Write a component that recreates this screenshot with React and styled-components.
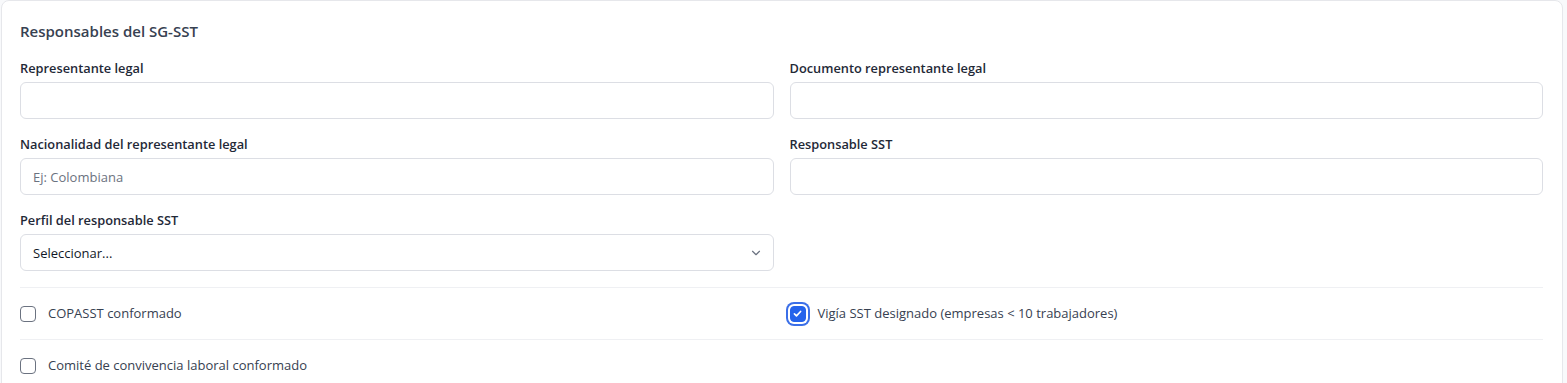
import React from "react";
import styled, { createGlobalStyle } from "styled-components";

const Global = createGlobalStyle`
  html, body { margin: 0; padding: 0; background: #f8f9fb; }
  body { font-family: "Open Sans", "Noto Sans", Arial, sans-serif; }
  * { box-sizing: border-box; }
`;

const Card = styled.section`
  margin: 0 4px 0 1px;
  background: #ffffff;
  border: 1px solid #e6e7eb;
  border-radius: 8px;
  padding: 19px 19px 20px 18px;
  min-height: 400px;
`;

const Title = styled.h2`
  margin: 0 0 17px 0;
  font-size: 15px;
  line-height: 22px;
  font-weight: 600;
  color: #374151;
`;

const Grid = styled.div`
  display: grid;
  grid-template-columns: 1fr 1fr;
  column-gap: 16px;
  row-gap: 16px;
`;

const Field = styled.div`
  display: flex;
  flex-direction: column;
  gap: 5px;
`;

const Label = styled.label`
  font-size: 12.8px;
  line-height: 18px;
  font-weight: 600;
  color: #1f2937;
`;

const Input = styled.input`
  height: 37px;
  width: 100%;
  border: 1px solid #dcdee4;
  border-radius: 6px;
  padding: 0 12px;
  font-family: inherit;
  font-size: 13px;
  color: #111827;
  background: #fff;
  outline: none;
  &::placeholder { color: #6b7280; }
`;

const SelectBox = styled.div`
  height: 37px;
  border: 1px solid #dcdee4;
  border-radius: 6px;
  padding: 0 10px 0 12px;
  display: flex;
  align-items: center;
  justify-content: space-between;
  font-size: 13px;
  color: #111827;
`;

const Checks = styled.div`
  margin-top: 16px;
  display: flex;
  flex-direction: column;
`;

const CheckRow = styled.div`
  display: grid;
  grid-template-columns: 1fr 1fr;
  column-gap: 16px;
  border-top: 1px solid #eff0f3;
  padding: 16px 0;
`;

const CheckLabel = styled.label`
  display: flex;
  align-items: center;
  gap: 12px;
  font-size: 13px;
  line-height: 19px;
  color: #374151;
`;

const Box = styled.span`
  width: 16px;
  height: 16px;
  flex: none;
  border-radius: 4px;
  display: flex;
  align-items: center;
  justify-content: center;
  border: 1.5px solid ${(p) => (p.$checked ? "#2563eb" : "#6b7280")};
  background: ${(p) => (p.$checked ? "#2563eb" : "#fff")};
  box-shadow: ${(p) => (p.$checked ? "0 0 0 2px #fff, 0 0 0 4px #3b6fe8" : "none")};
`;

const Check = ({ checked, children }) => (
  <CheckLabel>
    <Box $checked={checked}>
      {checked && (
        <svg width="11" height="11" viewBox="0 0 16 16" fill="none">
          <path d="M3.5 8.5l3 3 6-6.5" stroke="#fff" strokeWidth="2.4" strokeLinecap="round" strokeLinejoin="round" />
        </svg>
      )}
    </Box>
    {children}
  </CheckLabel>
);

const Chevron = () => (
  <svg width="14" height="14" viewBox="0 0 24 24" fill="none" stroke="#6b7280" strokeWidth="2" strokeLinecap="round" strokeLinejoin="round">
    <path d="M6 9l6 6 6-6" />
  </svg>
);

export default function App() {
  return (
    <>
      <Global />
      <Card>
        <Title>Responsables del SG-SST</Title>
        <Grid>
          <Field>
            <Label>Representante legal</Label>
            <Input />
          </Field>
          <Field>
            <Label>Documento representante legal</Label>
            <Input />
          </Field>
          <Field>
            <Label>Nacionalidad del representante legal</Label>
            <Input placeholder="Ej: Colombiana" />
          </Field>
          <Field>
            <Label>Responsable SST</Label>
            <Input />
          </Field>
          <Field>
            <Label>Perfil del responsable SST</Label>
            <SelectBox>
              <span>Seleccionar...</span>
              <Chevron />
            </SelectBox>
          </Field>
        </Grid>
        <Checks>
          <CheckRow>
            <Check>COPASST conformado</Check>
            <Check checked>Vigía SST designado (empresas &lt; 10 trabajadores)</Check>
          </CheckRow>
          <CheckRow>
            <Check>Comité de convivencia laboral conformado</Check>
          </CheckRow>
        </Checks>
      </Card>
    </>
  );
}
